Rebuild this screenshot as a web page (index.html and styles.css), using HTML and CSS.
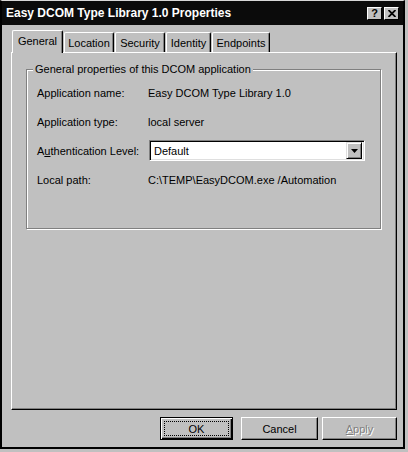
FILE: index.html
```html
<!DOCTYPE html>
<html lang="en">
<head>
    <meta charset="UTF-8">
    <meta name="viewport" content="width=device-width, initial-scale=1.0">
    <title>Easy DCOM Type Library 1.0 Properties</title>
    <link rel="stylesheet" href="styles.css">
</head>
<body>

<div class="window">
    <div class="titlebar">
        <span class="title">Easy DCOM Type Library 1.0 Properties</span>
        <div class="caption-btns">
            <span class="cap-btn help">?</span>
            <span class="cap-btn">
                <svg width="8" height="7" viewBox="0 0 8 7">
                    <path d="M0.5 0 L7.5 7 M7.5 0 L0.5 7" stroke="#000" stroke-width="1.8" fill="none"/>
                </svg>
            </span>
        </div>
    </div>

    <div class="tabs">
        <div class="tab selected tab-general">General</div>
        <div class="tab tab-location">Location</div>
        <div class="tab tab-security">Security</div>
        <div class="tab tab-identity">Identity</div>
        <div class="tab tab-endpoints">Endpoints</div>
    </div>

    <div class="panel">
        <fieldset class="group">
            <legend>General properties of this DCOM application</legend>
            <div class="props">
                <span class="label">Application name:</span>
                <span class="value">Easy DCOM Type Library 1.0</span>

                <span class="label">Application type:</span>
                <span class="value">local server</span>

                <span class="label">A<u>u</u>thentication Level:</span>
                <div class="combo">
                    <span class="combo-text">Default</span>
                    <span class="combo-btn">
                        <svg width="7" height="4" viewBox="0 0 7 4"><path d="M0 0 H7 L3.5 4 Z" fill="#000"/></svg>
                    </span>
                </div>

                <span class="label">Local path:</span>
                <span class="value">C:\TEMP\EasyDCOM.exe /Automation</span>
            </div>
        </fieldset>
    </div>

    <div class="buttons">
        <button class="btn default btn-ok"><span class="focus">OK</span></button>
        <button class="btn btn-cancel">Cancel</button>
        <button class="btn disabled btn-apply"><u>A</u>pply</button>
    </div>
</div>

</body>
</html>
```

FILE: styles.css
```css
body {
    margin: 0;
    padding: 0;
    background-color: #c0c0c0;
    font-family: "Liberation Sans", Arial, sans-serif;
    font-size: 11px;
    color: #000;
}
.window {
    width: 405px;
    height: 449px;
    box-sizing: border-box;
    border-top: 1px solid #d8d8d8;
    border-left: 2px solid #000;
    border-right: 2px solid #000;
    border-bottom: 2px solid #000;
    display: flex;
    flex-direction: column;
}
.titlebar {
    height: 24px;
    background: #0b0b0b;
    display: flex;
    align-items: center;
    justify-content: space-between;
    padding: 0 4px 0 4px;
}
.title {
    color: #fff;
    font-weight: bold;
    font-size: 12px;
}
.caption-btns {
    display: flex;
    gap: 2px;
}
.cap-btn {
    width: 15px;
    height: 13px;
    box-sizing: border-box;
    background: #c0c0c0;
    border-top: 1px solid #fff;
    border-left: 1px solid #fff;
    border-right: 1px solid #000;
    border-bottom: 1px solid #000;
    display: flex;
    align-items: center;
    justify-content: center;
}
.help {
    font-weight: bold;
    font-size: 11px;
    line-height: 11px;
}

/* tab strip */
.tabs {
    display: flex;
    align-items: flex-end;
    height: 23px;
    margin-top: 5px;
    margin-bottom: -1px;
    padding-left: 10px;
    gap: 1px;
    position: relative;
    z-index: 1;
}
.tab {
    height: 20px;
    margin-bottom: 1px;
    box-sizing: border-box;
    background: #c0c0c0;
    border-top: 1px solid #fff;
    border-left: 1px solid #fff;
    border-right: 1px solid #000;
    border-radius: 2px 2px 0 0;
    box-shadow: inset -1px 0 #808080;
    display: flex;
    align-items: center;
    justify-content: center;
}
.tab.selected {
    height: 23px;
    margin-bottom: 0;
    padding-bottom: 3px;
}
.tab-general { width: 51px; }
.tab-location { width: 50px; }
.tab-security { width: 50px; }
.tab-identity { width: 45px; }
.tab-endpoints { width: 58px; }

.panel {
    height: 358px;
    margin: 0 6px 0 9px;
    box-sizing: border-box;
    border-top: 1px solid #fff;
    border-left: 1px solid #fff;
    border-right: 1px solid #000;
    border-bottom: 1px solid #000;
    box-shadow: inset -1px -1px #808080;
    padding-top: 10px;
}

/* group box */
.group {
    margin: 0 0 0 14px;
    width: 355px;
    height: 166px;
    box-sizing: border-box;
    padding: 2px 0 0 0;
    border: 1px solid #808080;
    box-shadow: 1px 1px 0 #fff, inset 1px 1px 0 #fff;
}
.group legend {
    margin-left: 6px;
    padding: 0 2px;
    background: #c0c0c0;
    line-height: 13px;
}
.props {
    display: grid;
    grid-template-columns: 111px 217px;
    grid-auto-rows: 29px;
    align-items: center;
    padding-left: 10px;
}
.combo {
    margin-left: 1px;
    height: 21px;
    box-sizing: border-box;
    background: #fff;
    border-top: 1px solid #808080;
    border-left: 1px solid #808080;
    border-right: 1px solid #fff;
    border-bottom: 1px solid #fff;
    box-shadow: inset 1px 1px #000, inset -1px -1px #dfdfdf;
    display: flex;
    align-items: center;
    justify-content: space-between;
    padding: 2px;
}
.combo-text {
    padding-left: 2px;
}
.combo-btn {
    width: 16px;
    height: 17px;
    box-sizing: border-box;
    background: #c0c0c0;
    border-top: 1px solid #dfdfdf;
    border-left: 1px solid #dfdfdf;
    border-right: 1px solid #000;
    border-bottom: 1px solid #000;
    box-shadow: inset 1px 1px #fff, inset -1px -1px #808080;
    display: flex;
    align-items: center;
    justify-content: center;
}

/* dialog buttons */
.buttons {
    display: flex;
    justify-content: flex-end;
    margin-top: 7px;
    padding-right: 6px;
}
.btn {
    height: 23px;
    padding: 0;
    box-sizing: border-box;
    background: #c0c0c0;
    font-family: inherit;
    font-size: 11px;
    color: #000;
    border-top: 1px solid #fff;
    border-left: 1px solid #fff;
    border-right: 1px solid #000;
    border-bottom: 1px solid #000;
    box-shadow: inset -1px -1px #808080;
}
.btn.default {
    border: 1px solid #000;
    box-shadow: inset 1px 1px #fff, inset -1px -1px #000, inset -2px -2px #808080;
    padding: 3px;
}
.btn-ok { width: 73px; margin-right: 8px; }
.btn-cancel { width: 77px; margin-right: 4px; }
.btn-apply { width: 75px; }
.focus {
    display: flex;
    align-items: center;
    justify-content: center;
    height: 100%;
    border: 1px dotted #000;
    box-sizing: border-box;
}
.btn.disabled {
    color: #808080;
    text-shadow: 1px 1px 0 #fff;
}
```
